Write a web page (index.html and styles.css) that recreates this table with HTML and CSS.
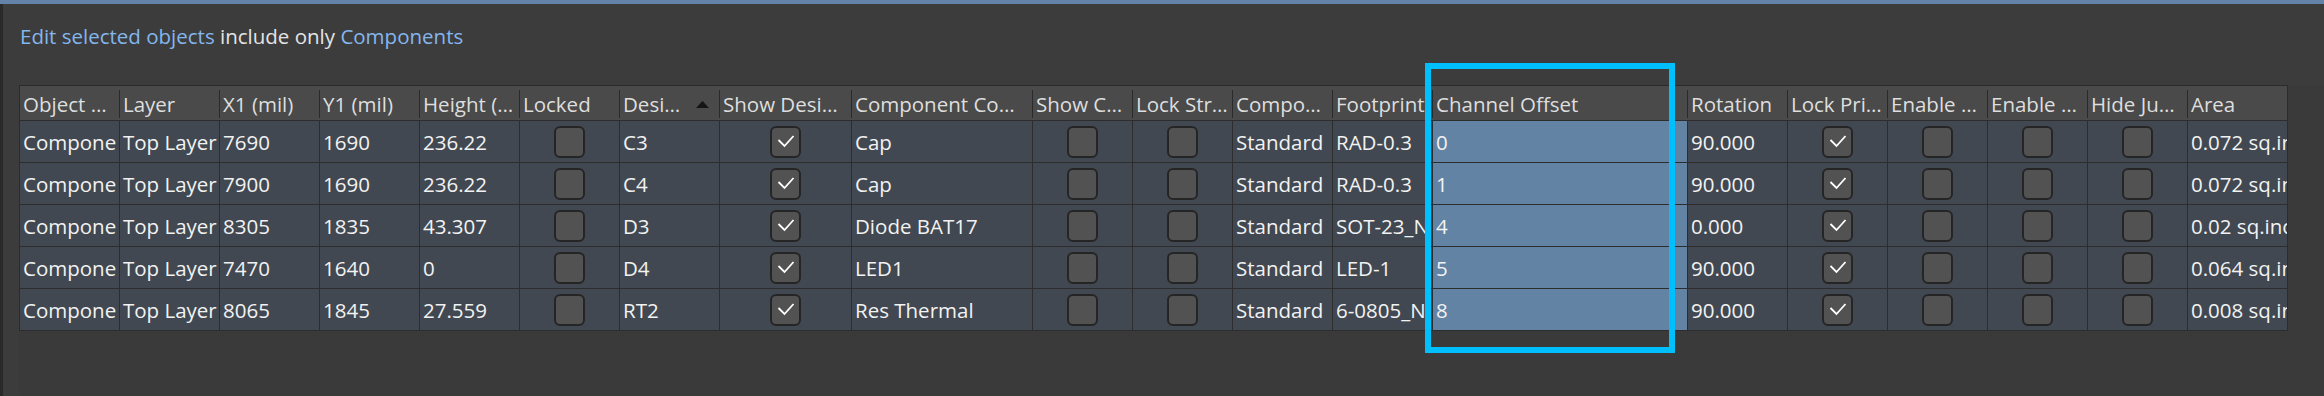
FILE: index.html
```html
<!DOCTYPE html>
<html lang="en">
<head>
<meta charset="utf-8">
<title>PCB Inspector</title>
<link rel="stylesheet" href="styles.css">
</head>
<body>
<div class="topbar"></div>
<div class="frame">
  <div class="edge"></div>
  <div class="panel">
    <p class="filter"><span class="link">Edit selected objects</span> include only <span class="link">Components</span></p>
    <div class="view">
      <div class="grid">
        <div class="row head">
          <div class="h"><span>Object …</span></div>
          <div class="h"><span>Layer</span></div>
          <div class="h"><span>X1 (mil)</span></div>
          <div class="h"><span>Y1 (mil)</span></div>
          <div class="h"><span>Height (…</span></div>
          <div class="h"><span>Locked</span></div>
          <div class="h sorted"><span>Desi… <svg class="arrow" width="13" height="7" viewBox="0 0 13 7"><polygon points="0,7 6.5,0 13,7"/></svg></span></div>
          <div class="h"><span>Show Desi…</span></div>
          <div class="h"><span>Component Co…</span></div>
          <div class="h"><span>Show C…</span></div>
          <div class="h"><span>Lock Str…</span></div>
          <div class="h"><span>Compo…</span></div>
          <div class="h"><span>Footprint</span></div>
          <div class="h"><span>Channel Offset</span></div>
          <div class="h"><span>Rotation</span></div>
          <div class="h"><span>Lock Pri…</span></div>
          <div class="h"><span>Enable …</span></div>
          <div class="h"><span>Enable …</span></div>
          <div class="h"><span>Hide Ju…</span></div>
          <div class="h last"><span>Area</span></div>
        </div>

        <div class="row">
          <div class="c">Compone</div>
          <div class="c">Top Layer</div>
          <div class="c">7690</div>
          <div class="c">1690</div>
          <div class="c">236.22</div>
          <div class="c box"><i class="cb"></i></div>
          <div class="c">C3</div>
          <div class="c box"><i class="cb"><svg viewBox="0 0 27 28"><polyline points="6.5,12 12.5,18 21.5,8"/></svg></i></div>
          <div class="c">Cap</div>
          <div class="c box"><i class="cb"></i></div>
          <div class="c box"><i class="cb"></i></div>
          <div class="c">Standard</div>
          <div class="c">RAD-0.3</div>
          <div class="c sel">0</div>
          <div class="c">90.000</div>
          <div class="c box"><i class="cb"><svg viewBox="0 0 27 28"><polyline points="6.5,12 12.5,18 21.5,8"/></svg></i></div>
          <div class="c box"><i class="cb"></i></div>
          <div class="c box"><i class="cb"></i></div>
          <div class="c box"><i class="cb"></i></div>
          <div class="c">0.072 sq.inch</div>
        </div>

        <div class="row">
          <div class="c">Compone</div>
          <div class="c">Top Layer</div>
          <div class="c">7900</div>
          <div class="c">1690</div>
          <div class="c">236.22</div>
          <div class="c box"><i class="cb"></i></div>
          <div class="c">C4</div>
          <div class="c box"><i class="cb"><svg viewBox="0 0 27 28"><polyline points="6.5,12 12.5,18 21.5,8"/></svg></i></div>
          <div class="c">Cap</div>
          <div class="c box"><i class="cb"></i></div>
          <div class="c box"><i class="cb"></i></div>
          <div class="c">Standard</div>
          <div class="c">RAD-0.3</div>
          <div class="c sel">1</div>
          <div class="c">90.000</div>
          <div class="c box"><i class="cb"><svg viewBox="0 0 27 28"><polyline points="6.5,12 12.5,18 21.5,8"/></svg></i></div>
          <div class="c box"><i class="cb"></i></div>
          <div class="c box"><i class="cb"></i></div>
          <div class="c box"><i class="cb"></i></div>
          <div class="c">0.072 sq.inch</div>
        </div>

        <div class="row">
          <div class="c">Compone</div>
          <div class="c">Top Layer</div>
          <div class="c">8305</div>
          <div class="c">1835</div>
          <div class="c">43.307</div>
          <div class="c box"><i class="cb"></i></div>
          <div class="c">D3</div>
          <div class="c box"><i class="cb"><svg viewBox="0 0 27 28"><polyline points="6.5,12 12.5,18 21.5,8"/></svg></i></div>
          <div class="c">Diode BAT17</div>
          <div class="c box"><i class="cb"></i></div>
          <div class="c box"><i class="cb"></i></div>
          <div class="c">Standard</div>
          <div class="c">SOT-23_N</div>
          <div class="c sel">4</div>
          <div class="c">0.000</div>
          <div class="c box"><i class="cb"><svg viewBox="0 0 27 28"><polyline points="6.5,12 12.5,18 21.5,8"/></svg></i></div>
          <div class="c box"><i class="cb"></i></div>
          <div class="c box"><i class="cb"></i></div>
          <div class="c box"><i class="cb"></i></div>
          <div class="c">0.02 sq.inch</div>
        </div>

        <div class="row">
          <div class="c">Compone</div>
          <div class="c">Top Layer</div>
          <div class="c">7470</div>
          <div class="c">1640</div>
          <div class="c">0</div>
          <div class="c box"><i class="cb"></i></div>
          <div class="c">D4</div>
          <div class="c box"><i class="cb"><svg viewBox="0 0 27 28"><polyline points="6.5,12 12.5,18 21.5,8"/></svg></i></div>
          <div class="c">LED1</div>
          <div class="c box"><i class="cb"></i></div>
          <div class="c box"><i class="cb"></i></div>
          <div class="c">Standard</div>
          <div class="c">LED-1</div>
          <div class="c sel">5</div>
          <div class="c">90.000</div>
          <div class="c box"><i class="cb"><svg viewBox="0 0 27 28"><polyline points="6.5,12 12.5,18 21.5,8"/></svg></i></div>
          <div class="c box"><i class="cb"></i></div>
          <div class="c box"><i class="cb"></i></div>
          <div class="c box"><i class="cb"></i></div>
          <div class="c">0.064 sq.inch</div>
        </div>

        <div class="row">
          <div class="c">Compone</div>
          <div class="c">Top Layer</div>
          <div class="c">8065</div>
          <div class="c">1845</div>
          <div class="c">27.559</div>
          <div class="c box"><i class="cb"></i></div>
          <div class="c">RT2</div>
          <div class="c box"><i class="cb"><svg viewBox="0 0 27 28"><polyline points="6.5,12 12.5,18 21.5,8"/></svg></i></div>
          <div class="c">Res Thermal</div>
          <div class="c box"><i class="cb"></i></div>
          <div class="c box"><i class="cb"></i></div>
          <div class="c">Standard</div>
          <div class="c">6-0805_N</div>
          <div class="c sel">8</div>
          <div class="c">90.000</div>
          <div class="c box"><i class="cb"><svg viewBox="0 0 27 28"><polyline points="6.5,12 12.5,18 21.5,8"/></svg></i></div>
          <div class="c box"><i class="cb"></i></div>
          <div class="c box"><i class="cb"></i></div>
          <div class="c box"><i class="cb"></i></div>
          <div class="c">0.008 sq.inch</div>
        </div>
      </div>
    </div>
  </div>
</div>
<div class="focus"></div>
</body>
</html>
```

FILE: styles.css
```css
* {
  box-sizing: border-box;
}

html,
body {
  margin: 0;
}

body {
  position: relative;
  width: 2324px;
  height: 396px;
  overflow: hidden;
  background: #3c3c3c;
  font-family: "Open Sans", "Noto Sans", sans-serif;
  font-size: 20.5px;
  color: #f2f2f2;
}

/* window chrome */
.topbar {
  height: 4px;
  background: #6384a8;
}

.frame {
  display: flex;
  height: 392px;
}

.edge {
  flex: none;
  width: 3px;
  background: #2a2a2a;
}

.panel {
  flex: 1;
  display: flex;
  flex-direction: column;
}

/* filter summary line */
.filter {
  margin: 0;
  height: 81px;
  padding: 19px 0 0 17px;
  line-height: 27px;
  color: #e4e4e4;
  white-space: nowrap;
}

.link {
  color: #84b6ee;
}

/* inspector grid */
.view {
  flex: 1;
  margin-left: 16px;
  background: #3a3a3a;
}

.grid {
  width: fit-content;
  border-left: 1px solid #2b2b2b;
  border-top: 1px solid #2b2b2b;
}

.row {
  display: grid;
  grid-template-columns: repeat(7, 100px) 132px 181px repeat(4, 100px) 255px repeat(6, 100px);
  height: 42px;
  border-bottom: 1px solid #2d2d2d;
  background: #414851;
}

.row.head {
  height: 35px;
  background: #4a4a4a;
  color: #dedede;
}

.h {
  padding: 4px 0 3px;
  min-width: 0;
}

.h > span {
  display: flex;
  align-items: center;
  height: 100%;
  padding-left: 3px;
  border-right: 1px solid #2a2a2a;
  overflow: hidden;
  white-space: nowrap;
}

.h.last {
  padding: 0;
  border-right: 1px solid #2d2d2d;
}

.h.last > span {
  border-right: none;
}

.h.sorted > span {
  justify-content: space-between;
  padding-right: 10px;
}

.arrow {
  flex: none;
  fill: #151515;
}

.c {
  display: flex;
  align-items: center;
  min-width: 0;
  padding-left: 3px;
  border-right: 1px solid #2d2d2d;
  overflow: hidden;
  white-space: nowrap;
}

.c.box {
  justify-content: center;
  padding-left: 0;
}

.c.sel {
  background: #6283a3;
}

/* checkbox */
.cb {
  display: block;
  width: 31px;
  height: 32px;
  border: 2px solid #252525;
  border-radius: 6px;
  background: #525252;
}

.cb svg {
  display: block;
  width: 27px;
  height: 28px;
  fill: none;
  stroke: #ffffff;
  stroke-width: 1.8;
}

/* selection frame drawn over the Channel Offset column */
.focus {
  position: absolute;
  left: 1425px;
  top: 63px;
  width: 250px;
  height: 290px;
  border: 6px solid #00bfff;
  pointer-events: none;
}
```
